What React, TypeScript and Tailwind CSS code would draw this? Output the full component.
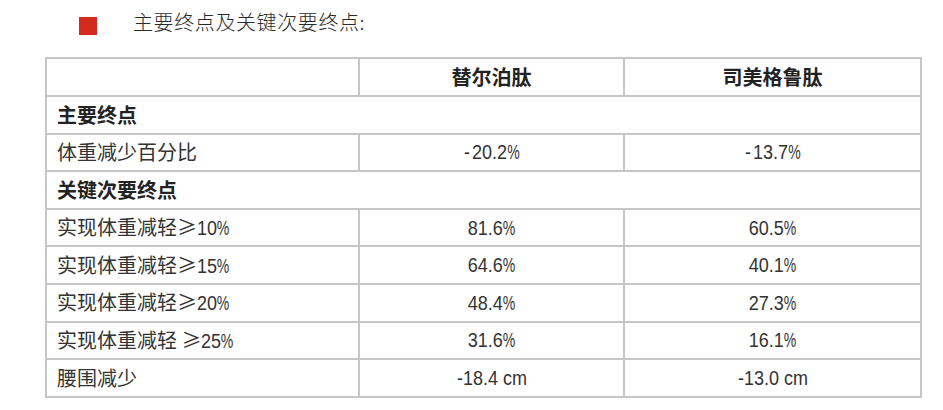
import React from "react";

const cjk = { fontFamily: '"Noto Sans CJK SC", "Liberation Sans", sans-serif' };
const lat = { fontFamily: '"Liberation Sans", "Noto Sans CJK SC", sans-serif' };

function Pct() {
  return <span className="inline-block origin-left scale-x-[0.78] -mr-[4px]">%</span>;
}

function Num({ v, left }: { v: string; left?: boolean }) {
  const hasPct = v.endsWith("%");
  const body = hasPct ? v.slice(0, -1) : v;
  const minus = body.startsWith("-") && hasPct;
  const rest = minus ? body.slice(1) : body;
  return (
    <span
      className={
        "inline-block text-[20px] scale-x-[0.9] " + (left ? "origin-left" : "origin-center")
      }
      style={lat}
    >
      {minus && <span className="mr-[2px]">-</span>}
      {rest}
      {hasPct && <Pct />}
    </span>
  );
}

function Label({ zh, ge, num }: { zh: string; ge?: string; num?: string }) {
  return (
    <span>
      {zh}
      {ge !== undefined && <span style={cjk}>{ge}</span>}
      {num && <Num v={num} left />}
    </span>
  );
}

type Row =
  | { kind: "section"; title: string }
  | { kind: "data"; label: React.ReactNode; a: string; b: string };

const rows: Row[] = [
  { kind: "section", title: "主要终点" },
  { kind: "data", label: <Label zh="体重减少百分比" />, a: "-20.2%", b: "-13.7%" },
  { kind: "section", title: "关键次要终点" },
  { kind: "data", label: <Label zh="实现体重减轻" ge="≥" num="10%" />, a: "81.6%", b: "60.5%" },
  { kind: "data", label: <Label zh="实现体重减轻" ge="≥" num="15%" />, a: "64.6%", b: "40.1%" },
  { kind: "data", label: <Label zh="实现体重减轻" ge="≥" num="20%" />, a: "48.4%", b: "27.3%" },
  { kind: "data", label: <Label zh="实现体重减轻 " ge="≥" num="25%" />, a: "31.6%", b: "16.1%" },
  { kind: "data", label: <Label zh="腰围减少" />, a: "-18.4 cm", b: "-13.0 cm" },
];

export default function App() {
  return (
    <div className="w-[943px] h-[410px] bg-white overflow-hidden" style={cjk}>
      <div className="flex items-start pl-[79px] pt-[11px] h-[38px]">
        <div className="w-[18px] h-[18px] bg-[#d42b1f] mt-[6px]" />
        <div className="ml-[36px] text-[20px] leading-[22px] text-[#2a2a2a] tracking-[0.6px] font-light">
          主要终点及关键次要终点:
        </div>
      </div>
      <div className="ml-[45px] mt-[19px] w-[877px] border-2 border-[#c6c6c6] text-[20px] text-[#333]">
        <div className="flex h-[36px] font-bold text-[#222]">
          <div className="w-[313px] border-r-2 border-[#c6c6c6]" />
          <div className="w-[265px] border-r-2 border-[#c6c6c6] flex items-center justify-center">替尔泊肽</div>
          <div className="flex-1 flex items-center justify-center">司美格鲁肽</div>
        </div>
        {rows.map((r, i) =>
          r.kind === "section" ? (
            <div key={i} className="h-[37.6px] border-t-2 border-[#c6c6c6] flex items-center pl-[10px] font-bold text-[#222]">
              {r.title}
            </div>
          ) : (
            <div key={i} className="flex h-[37.6px] border-t-2 border-[#c6c6c6]">
              <div className="w-[313px] border-r-2 border-[#c6c6c6] flex items-center pl-[10px]">{r.label}</div>
              <div className="w-[265px] border-r-2 border-[#c6c6c6] flex items-center justify-center">
                <Num v={r.a} />
              </div>
              <div className="flex-1 flex items-center justify-center">
                <Num v={r.b} />
              </div>
            </div>
          )
        )}
      </div>
    </div>
  );
}
